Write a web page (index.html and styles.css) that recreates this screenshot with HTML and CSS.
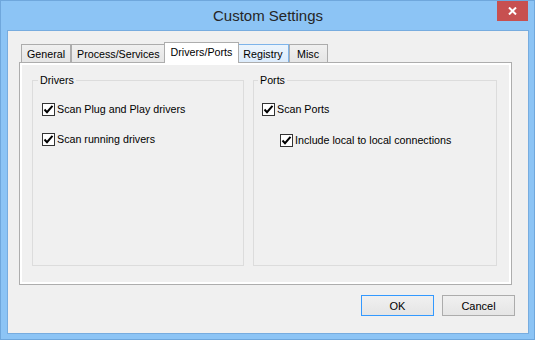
FILE: index.html
```html
<!DOCTYPE html>
<html lang="en">
<head>
    <meta charset="UTF-8">
    <title>Custom Settings</title>
    <link rel="stylesheet" href="styles.css">
</head>
<body>
    <div class="window">
        <div class="titlebar">
            <span></span>
            <div class="title">Custom Settings</div>
            <div class="close">
                <svg width="9" height="8" viewBox="0 0 9 8"><path d="M1 0.5 L8 7.5 M8 0.5 L1 7.5" stroke="#fff" stroke-width="2" fill="none"/></svg>
            </div>
        </div>

        <div class="client">
            <div class="tabs">
                <div class="tab">General</div>
                <div class="tab">Process/Services</div>
                <div class="tab active">Drivers/Ports</div>
                <div class="tab hover">Registry</div>
                <div class="tab misc">Misc</div>
            </div>

            <div class="panel">
                <div class="page">
                    <fieldset class="group">
                        <legend>Drivers</legend>
                        <label class="check">
                            <span class="box"><svg width="11" height="11" viewBox="0 0 11 11"><path d="M1.5 5.5 L4 8.2 L9.5 1.8" stroke="#000" stroke-width="2" fill="none"/></svg></span>
                            Scan Plug and Play drivers
                        </label>
                        <label class="check">
                            <span class="box"><svg width="11" height="11" viewBox="0 0 11 11"><path d="M1.5 5.5 L4 8.2 L9.5 1.8" stroke="#000" stroke-width="2" fill="none"/></svg></span>
                            Scan running drivers
                        </label>
                    </fieldset>

                    <fieldset class="group ports">
                        <legend>Ports</legend>
                        <label class="check">
                            <span class="box"><svg width="11" height="11" viewBox="0 0 11 11"><path d="M1.5 5.5 L4 8.2 L9.5 1.8" stroke="#000" stroke-width="2" fill="none"/></svg></span>
                            Scan Ports
                        </label>
                        <label class="check sub">
                            <span class="box"><svg width="11" height="11" viewBox="0 0 11 11"><path d="M1.5 5.5 L4 8.2 L9.5 1.8" stroke="#000" stroke-width="2" fill="none"/></svg></span>
                            Include local to local connections
                        </label>
                    </fieldset>
                </div>
            </div>

            <div class="buttons">
                <button class="btn default">OK</button>
                <button class="btn">Cancel</button>
            </div>
        </div>
    </div>
</body>
</html>
```

FILE: styles.css
```css
* {
    box-sizing: border-box;
}

body {
    margin: 0;
    font-family: "Liberation Sans", Arial, sans-serif;
    font-size: 10.7px;
    color: #000;
}

.window {
    width: 535px;
    height: 340px;
    background-color: #8cc4f5;
    border: 1px solid #6fa7dc;
    padding: 0 5px 5px 6px;
    display: flex;
    flex-direction: column;
}

.titlebar {
    height: 29px;
    display: grid;
    grid-template-columns: 1fr auto 1fr;
    align-items: start;
}

.title {
    font-size: 15px;
    line-height: 30px;
    color: #262626;
}

.close {
    justify-self: end;
    width: 31px;
    height: 20px;
    margin-right: 1px;
    background-color: #c75050;
    display: flex;
    align-items: center;
    justify-content: center;
}

.client {
    flex: 1;
    background-color: #f0f0f0;
    border: 1px solid #77acdf;
    padding: 11px 13px 17px 11px;
    display: flex;
    flex-direction: column;
}

/* tab strip */
.tabs {
    height: 20px;
    padding-left: 2px;
    margin-right: 3px;
    display: flex;
    align-items: flex-end;
}

.tab {
    height: 18px;
    line-height: 18px;
    padding: 0 5px;
    text-align: center;
    border: 1px solid #acacac;
    border-bottom: none;
    background: linear-gradient(#f0f0f0, #e5e5e5);
}

.tab.misc {
    min-width: 39px;
}

.tab.hover {
    background: linear-gradient(#ecf4fc, #dcecfc);
    border-color: #7eb4ea;
}

.tab.active {
    position: relative;
    z-index: 1;
    height: 21px;
    line-height: 18px;
    padding: 0 6px;
    margin: 0 -2px -1px;
    background: #fff;
    border-color: #adadad;
}

.panel {
    flex: 1;
    margin-right: 3px;
    border: 1px solid #adadad;
    background-color: #fff;
    padding: 2px;
    display: flex;
}

.page {
    flex: 1;
    background-color: #f0f0f0;
    padding: 9px 12px 16px 10px;
    display: grid;
    grid-template-columns: 212px 1fr;
    column-gap: 9px;
}

.group {
    margin: 0;
    min-width: 0;
    border: 1px solid #dcdcdc;
    padding: 14px 8px 0 9px;
    display: flex;
    flex-direction: column;
    gap: 14px;
}

.group legend {
    padding: 0 2px;
    margin-left: -4px;
    line-height: 13px;
}

.group.ports {
    padding-left: 8px;
}

.check {
    height: 16px;
    display: flex;
    align-items: center;
    white-space: nowrap;
}

.check.sub {
    margin-top: 1px;
    margin-left: 18px;
}

.box {
    width: 13px;
    height: 13px;
    margin-right: 2px;
    border: 1px solid #333;
    background-color: #fff;
    display: flex;
}

.buttons {
    margin-top: 10px;
    display: flex;
    justify-content: flex-end;
    gap: 8px;
}

.btn {
    width: 73px;
    height: 21px;
    padding: 0;
    font-family: inherit;
    font-size: 11px;
    color: #000;
    border: 1px solid #acacac;
    background: linear-gradient(#f0f0f0, #e5e5e5);
}

.btn.default {
    border-color: #3399ff;
}
```
